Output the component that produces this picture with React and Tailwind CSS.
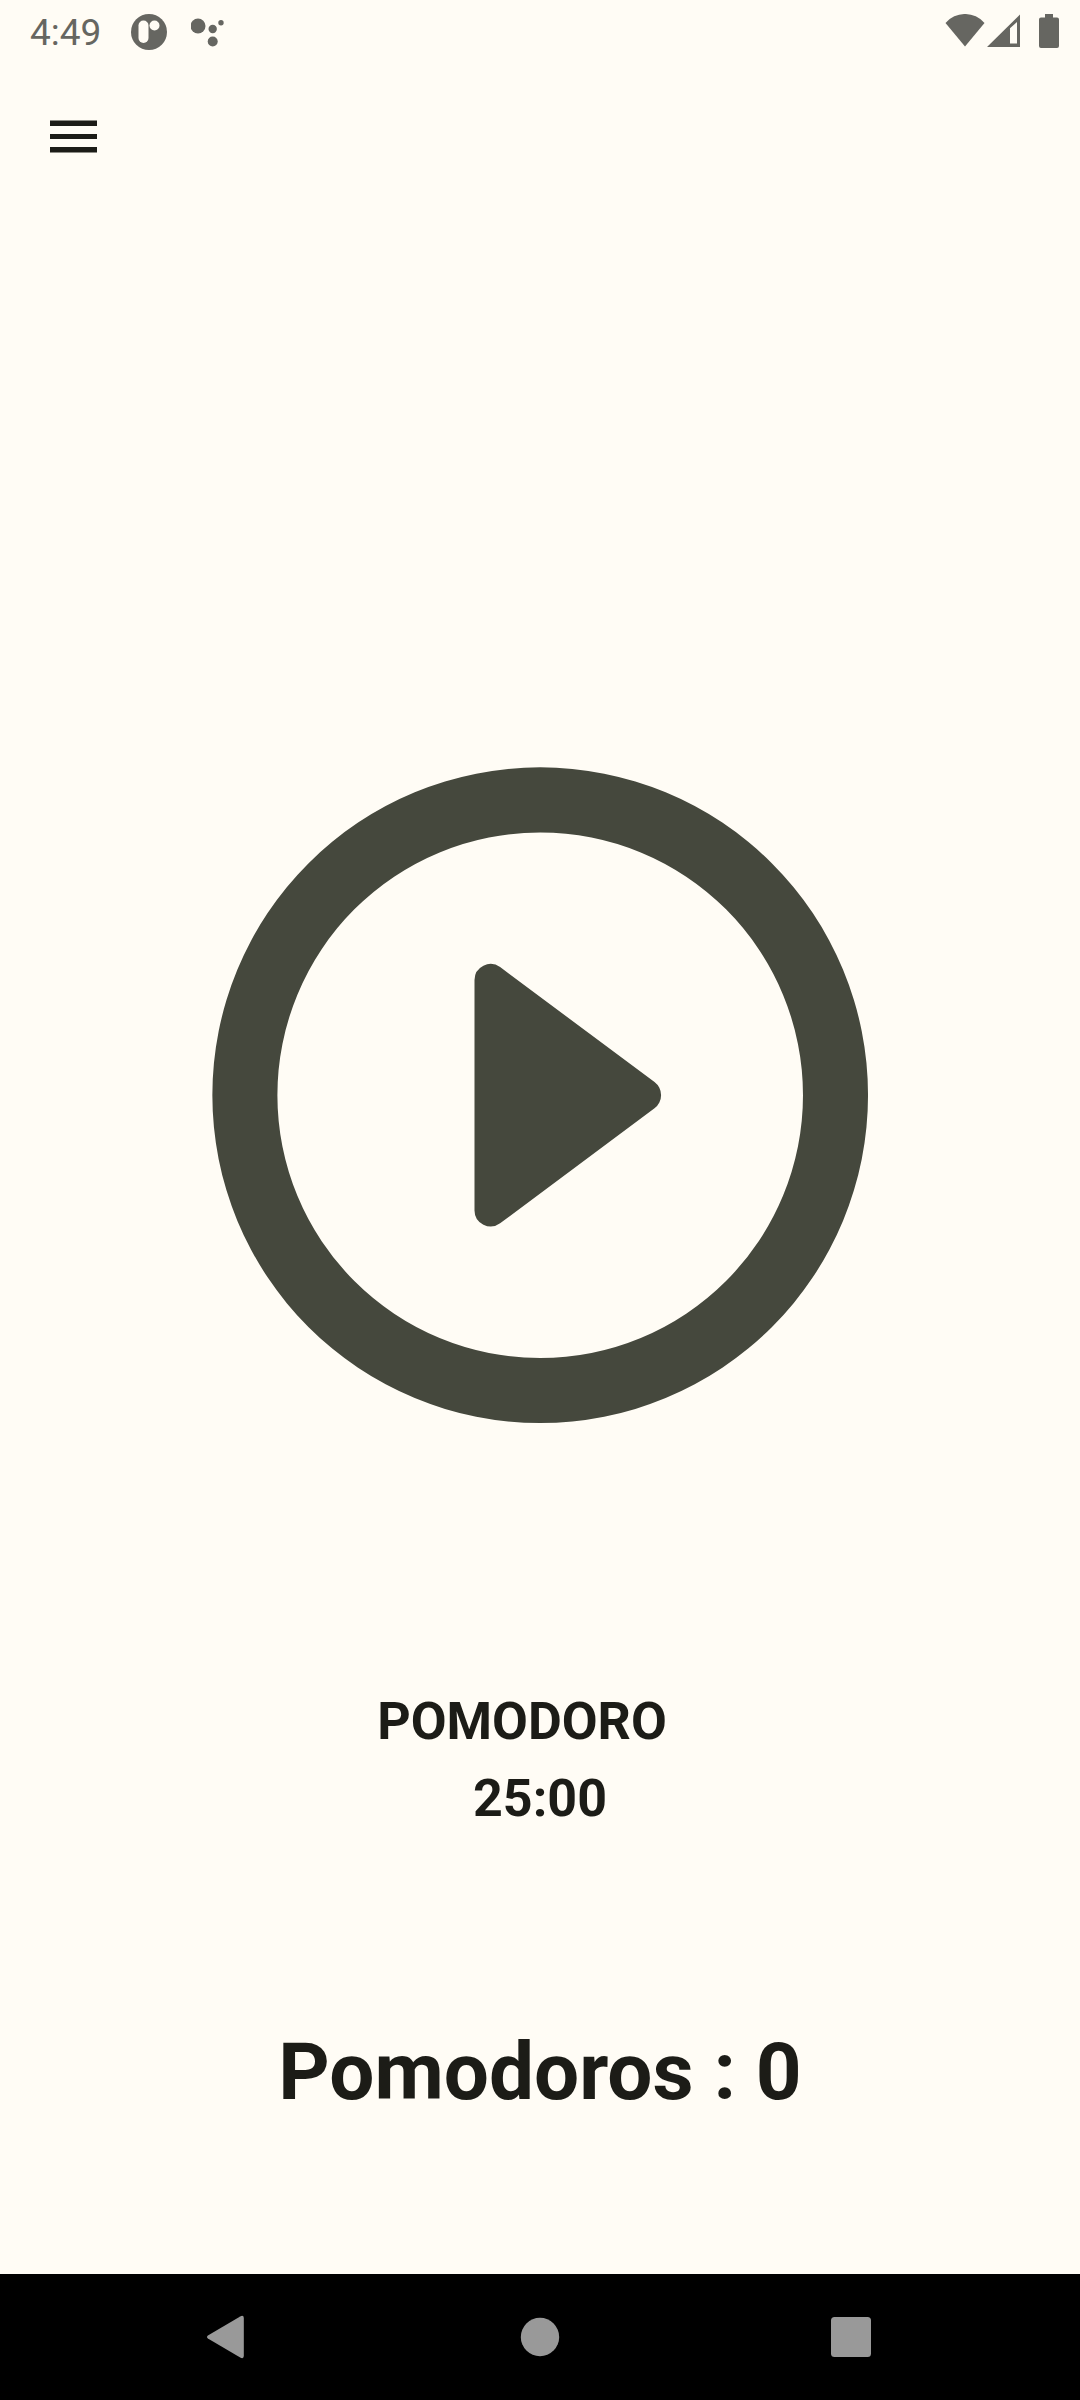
function StatusBar() {
  return (
    <div className="flex h-16 items-center justify-between pl-[30px] pr-[21px] text-[#666661]">
      <div className="flex items-center">
        <span className="w-[101px] pt-0.5 text-[37px] leading-[44px]">4:49</span>
        <svg className="h-9 w-9" viewBox="0 0 36 36" aria-hidden="true">
          <circle cx="18" cy="18" r="18" fill="currentColor" />
          <rect x="7.5" y="6.5" width="10" height="22.5" rx="5" fill="#fffcf5" />
          <circle cx="23.5" cy="11.5" r="5" fill="#fffcf5" />
        </svg>
        <svg className="ml-6 h-9 w-9 fill-current" viewBox="0 0 36 36" aria-hidden="true">
          <circle cx="7" cy="12" r="7.5" />
          <circle cx="21.7" cy="15" r="4.2" />
          <circle cx="30" cy="8.7" r="2.7" />
          <circle cx="21.7" cy="27.5" r="5" />
        </svg>
      </div>
      <div className="flex items-center">
        <svg className="h-9 w-10 fill-current" viewBox="0 0 40 36" aria-hidden="true">
          <path d="M20 32.5L.5 9A25.6 25.6 0 0 1 39.5 9Z" />
        </svg>
        <svg className="ml-0.5 h-9 w-[34px] fill-current" viewBox="0 0 34 36" aria-hidden="true">
          <path fillRule="evenodd" d="M0 33L33 .5V33ZM23 14.3V29.5H30V8Z" />
        </svg>
        <svg className="ml-[18px] h-9 w-5 fill-current" viewBox="0 0 20 36" aria-hidden="true">
          <path d="M6 0H14V3.5H18Q20 3.5 20 5.5V32Q20 34 18 34H2Q0 34 0 32V5.5Q0 3.5 2 3.5H6Z" />
        </svg>
      </div>
    </div>
  );
}

function PlayIcon() {
  return (
    <svg className="block w-full fill-[#45483d]" viewBox="0 0 24 24" aria-hidden="true">
      <path
        fillRule="evenodd"
        d="M12 2.02a9.98 9.98 0 1 0 0 19.96a9.98 9.98 0 1 0 0-19.96zM12 4a8 8 0 1 1 0 16a8 8 0 1 1 0-16z"
      />
      <path d="M10 8.49A.49.49 0 0 1 10.78 8.1L15.48 11.6A.5.5 0 0 1 15.48 12.4L10.78 15.9A.49.49 0 0 1 10 15.51Z" />
    </svg>
  );
}

function NavigationBar() {
  const button = "flex w-[311px] justify-center";
  return (
    <nav className="flex h-[126px] items-center justify-center bg-black text-[#999999]">
      <button className={button} aria-label="Back">
        <svg className="h-11 w-11 fill-current" viewBox="0 0 44 44">
          <path d="M.9 20.4L33.2 1.4Q36.8 -.2 36.8 3V41Q36.8 44.2 33.2 42.6L.9 23.6Q-.9 22 .9 20.4Z" />
        </svg>
      </button>
      <button className={button} aria-label="Home">
        <svg className="h-11 w-11 fill-current" viewBox="0 0 44 44">
          <circle cx="22" cy="22" r="19.2" />
        </svg>
      </button>
      <button className={button} aria-label="Recent apps">
        <svg className="h-11 w-11 fill-current" viewBox="0 0 44 44">
          <rect x="2" y="2" width="40" height="40" rx="3.5" />
        </svg>
      </button>
    </nav>
  );
}

export default function App() {
  return (
    <div className="flex min-h-screen flex-col bg-[#fffcf5] font-['Roboto',sans-serif] text-[#1c1c17]">
      <StatusBar />
      <header className="flex px-10 pt-10">
        <button className="h-16 w-16" aria-label="Open menu">
          <svg className="h-16 w-16 fill-current" viewBox="0 0 64 64">
            <path d="M10 16.6h47v5.4H10zM10 30h47v5H10zM10 43h47v5.4H10z" />
          </svg>
        </button>
      </header>
      <main className="flex flex-1 flex-col items-center justify-end pb-[154px] text-center font-bold">
        <button className="w-[73%] rounded-full" aria-label="Start timer">
          <PlayIcon />
        </button>
        <div className="mt-[194px] text-[52px] leading-[77px]">
          <h1 className="pr-9">POMODORO</h1>
          <p>25:00</p>
        </div>
        <p className="mt-[187px] text-[80px] leading-[96px]">Pomodoros : 0</p>
      </main>
      <NavigationBar />
    </div>
  );
}
